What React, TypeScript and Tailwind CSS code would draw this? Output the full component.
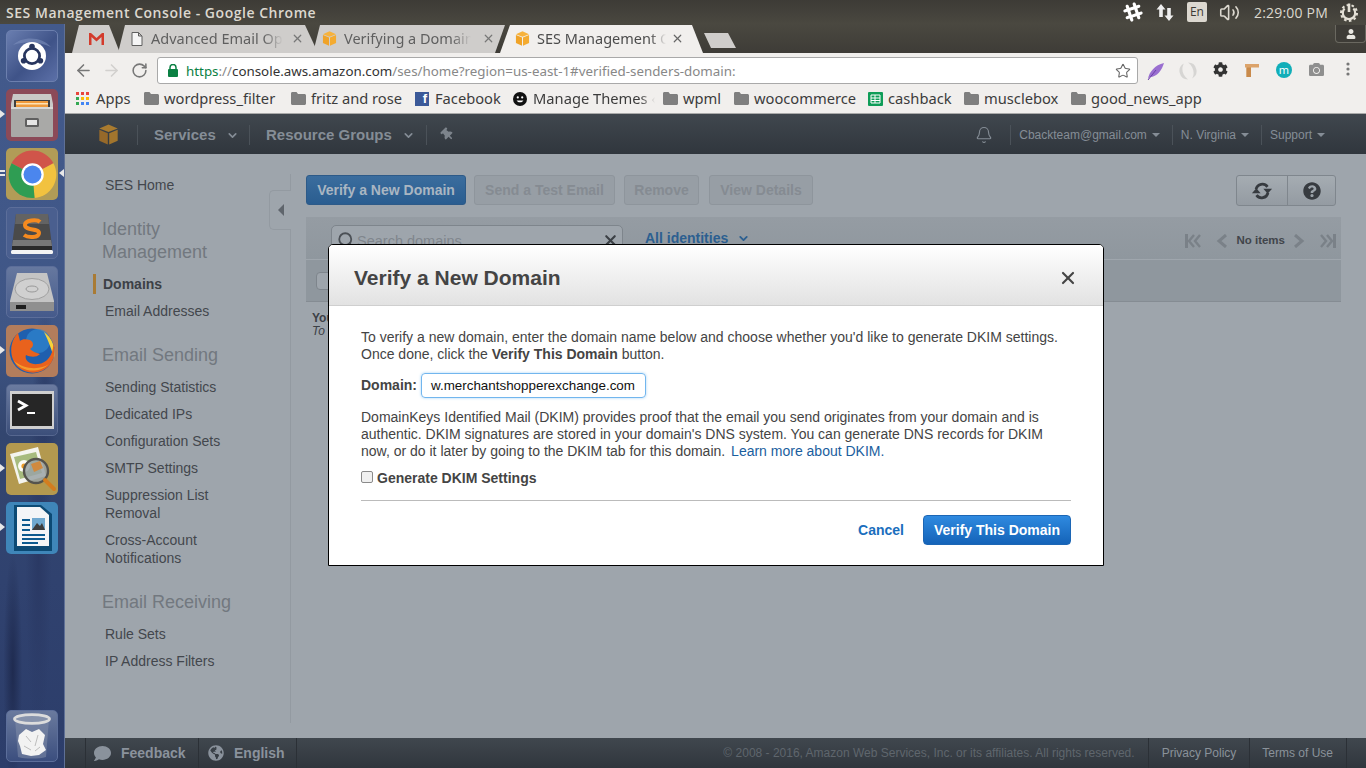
import React from "react";
import { ArrowLeft, ArrowRight, RotateCw, Star, Bell, X, Volume2, ChevronDown, Search } from "lucide-react";
import { FaSlackHash, FaCog, FaQuestionCircle, FaThumbtack, FaComment, FaGlobeAmericas, FaUser, FaCamera } from "react-icons/fa";

const Cube = ({ size, a, b, c }: { size: number; a: string; b: string; c: string }) => (
  <svg width={size} height={size} viewBox="0 0 24 24" className="shrink-0">
    <path d="M12 0.5 22.5 5 12 9.2 1.5 5Z" fill={a} />
    <path d="M1.5 6.5 11.2 10.5V23.5L1.5 19Z" fill={b} />
    <path d="M22.5 6.5 12.8 10.5V23.5L22.5 19Z" fill={c} />
  </svg>
);

const Folder = () => (
  <svg width="15" height="13" viewBox="0 0 15 13" className="shrink-0">
    <path d="M0 1.5C0 .7.6 0 1.4 0H5.5L7 2H13.5C14.3 2 15 2.7 15 3.5V11.5C15 12.3 14.3 13 13.5 13H1.5C.7 13 0 12.3 0 11.5Z" fill="#7f7f7f" />
  </svg>
);

const AppsGrid = () => (
  <svg width="13" height="13" viewBox="0 0 13 13" className="shrink-0">
    {[
      [0, 0, "#e8453c"], [5, 0, "#e8453c"], [10, 0, "#e8453c"],
      [0, 5, "#34a853"], [5, 5, "#fbbc05"], [10, 5, "#fbbc05"],
      [0, 10, "#34a853"], [5, 10, "#4285f4"], [10, 10, "#4285f4"],
    ].map(([x, y, f], i) => (
      <rect key={i} x={x as number} y={y as number} width="3" height="3" fill={f as string} />
    ))}
  </svg>
);

const Tile = ({ cls, children, pipL, pipR, pipD }: { cls: string; children: React.ReactNode; pipL?: boolean; pipR?: boolean; pipD?: boolean }) => (
  <div className={"relative ml-[6px] flex h-[52px] w-[52px] items-center justify-center rounded-[5px] " + cls}>
    {children}
    {pipL && <span className="absolute left-[-6px] top-[21px] h-0 w-0 border-y-[4px] border-l-[5px] border-y-transparent border-l-[#e8e8e8]" />}
    {pipD && <span className="absolute left-[-6px] top-[22px] h-[6px] w-[5px] border-y-2 border-[#e8e8e8]" />}
    {pipR && <span className="absolute right-[-6px] top-[21px] h-0 w-0 border-y-[4px] border-r-[5px] border-y-transparent border-r-[#e8e8e8]" />}
  </div>
);

const Launcher = () => (
  <div className="flex w-[65px] shrink-0 flex-col gap-[7px] border-r border-[#5f7096] bg-[radial-gradient(ellipse_at_20%_87%,#1f2b50_0%,transparent_13%),radial-gradient(ellipse_at_60%_72%,#2a3964_0%,transparent_24%),radial-gradient(ellipse_at_70%_52%,#2b3b66_0%,transparent_20%),linear-gradient(to_bottom,#435a8c_0%,#3f5686_42%,#33466f_55%,#30426f_75%,#2c3d6a_100%)] pb-[6px] pt-[6px]">
    <Tile cls="bg-[linear-gradient(135deg,#6a7eb0,#3f5388_55%,#5c70a8)] border border-[#6c7fae]">
      <svg width="46" height="46" viewBox="0 0 46 46">
        <path d="M4 12C14 2 34 4 42 14 30 8 16 8 4 12Z" fill="#7d90bd" fillOpacity="0.6" />
        <circle cx="23" cy="23" r="14" fill="#fff" />
        <circle cx="23" cy="23" r="7.6" fill="none" stroke="#28365f" strokeWidth="2.8" />
        <circle cx="23" cy="13.6" r="2.8" fill="#28365f" />
        <circle cx="14.6" cy="27.8" r="2.8" fill="#28365f" />
        <circle cx="31.4" cy="27.8" r="2.8" fill="#28365f" />
      </svg>
    </Tile>
    <Tile cls="bg-[#8b4a58]" pipL>
      <svg width="44" height="46" viewBox="0 0 44 46">
        <path d="M3 2H41L43 12V44H1V12Z" fill="#c9c9c7" />
        <rect x="4" y="8" width="36" height="10" fill="#3f3f3f" />
        <rect x="6" y="9" width="32" height="7" fill="#ef9a3c" />
        <rect x="6" y="11" width="32" height="1.5" fill="#fde2b5" />
        <rect x="1" y="15" width="42" height="30" rx="1" fill="#a9a9a7" />
        <rect x="1" y="15" width="42" height="2" fill="#d8d8d6" />
        <rect x="15" y="26" width="14" height="9" rx="1.5" fill="#5f5f5f" />
        <rect x="17" y="28" width="10" height="5" fill="#e5e5e5" />
      </svg>
    </Tile>
    <Tile cls="bg-[#b19c57]" pipD pipR>
      <svg width="49" height="49" viewBox="0 0 48 48">
        <path d="M24 24 3.5 13A23 23 0 0 1 44.5 13Z" fill="#d0554a" />
        <path d="M24 24 44.5 13A23 23 0 0 1 26 47Z" fill="#f2c23f" />
        <path d="M24 24 26 47A23 23 0 0 1 3.5 13Z" fill="#2f9d53" />
        <circle cx="24" cy="24" r="11" fill="#fff" />
        <circle cx="24" cy="24" r="8.8" fill="#4b86ee" />
      </svg>
    </Tile>
    <Tile cls="bg-[#4a5f8f] border border-[#5c6e9a]">
      <svg width="44" height="46" viewBox="0 0 44 46">
        <path d="M6 4H38L42 36H2Z" fill="#4a4a4a" />
        <path d="M6 4H38L39 14H5Z" fill="#636363" />
        <path d="M3 30H41L42 36H2Z" fill="#777" />
        <rect x="2" y="36" width="40" height="4" fill="#2a2a2a" />
        <rect x="1" y="40" width="42" height="4" rx="1.5" fill="#f4f4f4" />
        <path d="M30 12C27 9 15 10 15 15 15 21 29 18 29 23 29 28 18 28 14 25" fill="none" stroke="#f58a1f" strokeWidth="4" />
      </svg>
    </Tile>
    <Tile cls="bg-[linear-gradient(to_bottom,#66789f,#455a8b)] border border-[#5c6e9a]">
      <svg width="46" height="42" viewBox="0 0 46 42">
        <path d="M8 2H38L45 30V40H1V30Z" fill="#c4c4c4" />
        <ellipse cx="23" cy="18" rx="17" ry="10.5" fill="#d0d0d0" stroke="#a0a0a0" />
        <ellipse cx="23" cy="18" rx="6" ry="3" fill="none" stroke="#999" />
        <rect x="1" y="31" width="44" height="9" fill="#8f8f8f" />
        <rect x="7" y="34" width="10" height="4" fill="#1d1d1d" />
      </svg>
    </Tile>
    <Tile cls="bg-[#b37d5c]" pipL>
      <svg width="48" height="48" viewBox="0 0 48 48">
        <circle cx="24" cy="24" r="22.5" fill="#1f5fae" />
        <circle cx="30" cy="14" r="12" fill="#2f86cf" fillOpacity="0.7" />
        <path d="M36 5C44 11 48 20 46 31 44 24 41 15 36 5Z" fill="#f8d23a" />
        <path d="M10 6C2 14 0 30 10 40 20 49 36 47 43 36 47 30 47 22 45 16 46 26 40 36 30 37 22 38 16 33 18 28 22 30 28 31 32 27 28 26 24 24 22 22 26 20 26 15 22 13 18 12 14 12 12 14Z" fill="#e9621d" />
        <path d="M6 34C12 44 30 48 41 37 34 42 18 44 6 34Z" fill="#f59b2c" />
      </svg>
    </Tile>
    <Tile cls="bg-[linear-gradient(to_bottom,#6b7ba0,#3c4f7a)] border border-[#56678f]">
      <svg width="44" height="38" viewBox="0 0 44 38">
        <rect width="44" height="38" fill="#cfcfcf" />
        <rect x="2" y="3" width="40" height="32" fill="#262626" />
        <polyline points="8,10 16,14.5 8,19" fill="none" stroke="#fff" strokeWidth="2.8" />
        <rect x="17" y="21" width="8" height="2" fill="#fff" />
      </svg>
    </Tile>
    <Tile cls="bg-[#b3994f]" pipL>
      <svg width="50" height="50" viewBox="0 0 50 50">
        <path d="M3 10 31 3 39 32 12 40Z" fill="#f4f4ee" />
        <path d="M7 13 29 8 35 29 13 35Z" fill="#a7bb7e" />
        <circle cx="17" cy="22" r="6" fill="#fbfbf5" />
        <circle cx="17" cy="22" r="2.6" fill="#ec9b27" />
        <circle cx="29" cy="27" r="12" fill="#9aa3a6" fillOpacity="0.85" stroke="#55534d" strokeWidth="2.4" />
        <path d="M24 20 33 17 36 24 27 28Z" fill="#d08a3f" />
        <path d="M38 36 47 45" stroke="#d37d1f" strokeWidth="4" strokeLinecap="round" />
      </svg>
    </Tile>
    <Tile cls="bg-[#3f86b9]" pipL>
      <svg width="44" height="48" viewBox="0 0 44 48">
        <path d="M4 1H31L42 10V47H4Z" fill="#0c4a74" />
        <path d="M7 3H30L39 11V42H7Z" fill="#f3f5f7" />
        <rect x="12" y="15" width="8" height="2" fill="#0c5a8f" />
        <rect x="12" y="20" width="8" height="2" fill="#0c5a8f" />
        <rect x="12" y="25" width="8" height="2" fill="#0c5a8f" />
        <rect x="22" y="14" width="13" height="12" fill="#6fa8cf" />
        <path d="M22 26 27 19 30 22 32 19 35 26Z" fill="#3d3d3d" />
        <rect x="12" y="30" width="23" height="2" fill="#0c5a8f" />
        <rect x="12" y="34" width="23" height="2" fill="#0c5a8f" />
        <rect x="12" y="38" width="16" height="2" fill="#0c5a8f" />
      </svg>
    </Tile>
    <div className="mt-auto">
      <Tile cls="bg-[linear-gradient(to_bottom,#6a7a9e,#3b4e7e)] border border-[#5c6e9a]">
        <svg width="38" height="46" viewBox="0 0 38 46">
          <path d="M2 6H36L33 44C26 46 12 46 5 44Z" fill="#8692ab" fillOpacity="0.5" />
          <ellipse cx="19" cy="6" rx="17.5" ry="4.4" fill="#8793ac" stroke="#dcdcdc" strokeWidth="2.8" />
          <path d="M6 22 13 16 19 19 26 16 32 22 30 31 33 37 26 42 18 43 9 41 7 33 5 28Z" fill="#f2f2f2" />
          <path d="M13 23 18 29M25 22 22 33M11 33 18 37M27 34 22 38" stroke="#bdbdbd" strokeWidth="1" />
        </svg>
      </Tile>
    </div>
  </div>
);

const TopBar = () => (
  <div className="flex h-[24px] shrink-0 items-center bg-[linear-gradient(to_bottom,#3d3b36,#4a4840)] pl-[6px] font-['Open_Sans',sans-serif] text-[14px] font-semibold tracking-[0.53px] text-[#dcd8cf]">
    <span className="whitespace-nowrap">SES Management Console - Google Chrome</span>
    <div className="ml-auto flex h-full items-center">
      <div className="flex w-[32px] justify-center text-white"><FaSlackHash size={22} /></div>
      <div className="mr-[6px] flex w-[32px] justify-center">
        <svg width="18" height="17" viewBox="0 0 18 17">
          <path d="M5 0 9.5 5.5H6.8V13H3.2V5.5H.5Z" fill="#eee" />
          <path d="M13 17 8.5 11.5H11.2V4H14.8V11.5H17.5Z" fill="#eee" />
        </svg>
      </div>
      <div className="flex h-[20px] w-[20px] items-center justify-center rounded-[2px] bg-[#dcd8d0] text-[12px] font-normal tracking-normal text-[#3d3b36]">En</div>
      <div className="ml-[12px] flex w-[22px] justify-center text-[#dcd8cf]"><Volume2 size={21} strokeWidth={1.8} /></div>
      <span className="ml-[13px] whitespace-nowrap font-normal tracking-[0.2px]">2:29:00 PM</span>
      <div className="ml-[11px] mr-[7px] flex w-[20px] justify-center">
        <svg width="20" height="20" viewBox="0 0 20 20" fill="none" stroke="#e4e0d6">
          <circle cx="10" cy="11" r="8" strokeWidth="2" strokeDasharray="2.6 2.4" />
          <path d="M5.6 6.6A6.2 6.2 0 1 0 14.4 6.6" strokeWidth="2.2" />
          <path d="M10 1.5V10" strokeWidth="2.6" />
        </svg>
      </div>
    </div>
  </div>
);

const TabStrip = () => (
  <div className="relative flex h-[29px] shrink-0 bg-[linear-gradient(to_bottom,#4a4840,#3e3c37)] pl-[7px] pt-[1px] font-['Noto_Sans',sans-serif] text-[14.5px]">
    <div className="flex h-[28px] w-[48px] items-center justify-center bg-[#cfcdcb] pb-[1px] [clip-path:polygon(7px_0,37px_0,48px_100%,0_100%)]">
      <svg width="15" height="12" viewBox="0 0 15 12">
        <path d="M0 0H2L7.5 5 13 0H15V12H12.5V4L7.5 8.5 2.5 4V12H0Z" fill="#d33b2c" />
      </svg>
    </div>
    <div className="ml-[-2px] flex h-[28px] w-[200px] items-center bg-[#cfcdcb] pb-[1px] pl-[13px] pr-[14px] [clip-path:polygon(7px_0,187px_0,200px_100%,0_100%)]">
      <svg width="12" height="14" viewBox="0 0 12 14" className="shrink-0">
        <path d="M1 .5H7.5L11 4V13.5H1ZM7.5.5V4H11" fill="#f5f5f5" stroke="#5f5f5f" />
      </svg>
      <span className="ml-[8px] w-[132px] overflow-hidden whitespace-nowrap text-[#5f5f5f] [mask-image:linear-gradient(to_right,black_85%,transparent)]">Advanced Email Options</span>
      <X size={13} strokeWidth={2.2} className="ml-[8px] shrink-0 text-[#777]" />
    </div>
    <div className="ml-[-5px] flex h-[28px] w-[192px] items-center bg-[#cfcdcb] pb-[1px] pl-[9px] pr-[10px] [clip-path:polygon(0_100%,7px_0,182px_0,192px_0,182px_100%)]">
      <Cube size={15} a="#f7b23b" b="#f0a328" c="#f4ab30" />
      <span className="ml-[7px] w-[130px] overflow-hidden whitespace-nowrap text-[#5f5f5f] [mask-image:linear-gradient(to_right,black_85%,transparent)]">Verifying a Domain</span>
      <X size={13} strokeWidth={2.2} className="ml-[11px] shrink-0 text-[#777]" />
    </div>
    <div className="ml-[-5px] flex h-[28px] w-[203px] items-center bg-[#f1efed] pb-[1px] pl-[15px] pr-[10px] [clip-path:polygon(0_100%,10px_0,192px_0,203px_100%)]">
      <Cube size={15} a="#f7b23b" b="#f0a328" c="#f4ab30" />
      <span className="ml-[7px] w-[129px] overflow-hidden whitespace-nowrap text-[#4c4c4c] [mask-image:linear-gradient(to_right,black_88%,transparent)]">SES Management Console</span>
      <X size={13} strokeWidth={2.2} className="ml-[5px] shrink-0 text-[#666]" />
    </div>
    <div className="ml-[1px] mt-[8px] h-[15px] w-[32px] bg-[#cfcdcb] [clip-path:polygon(0_0,24px_0,32px_100%,7px_100%)]" />
    <div className="ml-auto mr-0 flex h-[18px] w-[31px] items-center justify-center rounded-b-[4px] border border-t-0 border-[#6a6860] bg-[#3e3c37] text-[#e8e6e0]">
      <FaUser size={10} />
    </div>
  </div>
);

const Toolbar = () => (
  <div className="flex h-[35px] shrink-0 items-center bg-[#f1efed] pl-[4px]">
    <div className="flex w-[28px] justify-center text-[#777]"><ArrowLeft size={19} strokeWidth={2} /></div>
    <div className="flex w-[28px] justify-center text-[#d2d0ce]"><ArrowRight size={19} strokeWidth={2} /></div>
    <div className="flex w-[28px] justify-center text-[#777]"><RotateCw size={17} strokeWidth={2.2} /></div>
    <div className="ml-[4px] flex h-[27px] w-[981px] items-center rounded-[3px] border border-[#a9a9a9] bg-white pl-[10px] font-['Noto_Sans',sans-serif] text-[13.35px]">
      <svg width="10" height="13" viewBox="0 0 10 13" className="shrink-0">
        <path d="M2 5.5V3.5A3 3 0 0 1 8 3.5V5.5" fill="none" stroke="#0b8043" strokeWidth="1.5" />
        <rect y="5" width="10" height="8" rx="1" fill="#0b8043" />
      </svg>
      <span className="ml-[8px] mt-[1px] whitespace-nowrap">
        <span className="text-[#0b8043]">https</span>
        <span className="text-[#888]">://</span>
        <span className="text-[#333]">console.aws.amazon.com</span>
        <span className="text-[#888]">/ses/home?region=us-east-1#verified-senders-domain:</span>
      </span>
      <Star size={16} strokeWidth={1.6} className="ml-auto mr-[6px] text-[#666]" />
    </div>
    <div className="ml-[2px] flex">
      <div className="flex w-[32px] justify-center">
        <svg width="18" height="18" viewBox="0 0 18 18">
          <path d="M1 17C2 10 8 3 17 1 15 8 10 15 3 15Z" fill="#9a6fd0" />
          <path d="M1 18 9 8" stroke="#6b3fa8" strokeWidth="1" />
        </svg>
      </div>
      <div className="flex w-[32px] justify-center">
        <svg width="18" height="18" viewBox="0 0 18 18" fill="#d6d5d3">
          <path d="M9 .5A8.5 8.5 0 0 1 13 16.5C16 12 15 5 9 .5Z" />
          <path d="M9 17.5A8.5 8.5 0 0 1 5 1.5C2 6 3 13 9 17.5Z" />
        </svg>
      </div>
      <div className="flex w-[32px] justify-center text-[#333]"><FaCog size={15} /></div>
      <div className="flex w-[32px] justify-center">
        <svg width="14" height="15" viewBox="0 0 14 15">
          <path d="M0 2H14V5.5H6V15H1.5V5.5H0Z" fill="#dca36a" />
          <path d="M1.5 5.5H6V15H1.5Z" fill="#c98a4b" />
        </svg>
      </div>
      <div className="flex w-[32px] justify-center">
        <div className="flex h-[16px] w-[16px] items-center justify-center rounded-full bg-[#11aeb8] font-['Noto_Sans',sans-serif] text-[11px] leading-none text-white">m</div>
      </div>
      <div className="flex w-[32px] justify-center text-[#8f8f8f]"><FaCamera size={15} /></div>
      <div className="flex w-[32px] justify-center">
        <svg width="4" height="14" viewBox="0 0 4 14" fill="#777">
          <circle cx="2" cy="2" r="1.6" /><circle cx="2" cy="7" r="1.6" /><circle cx="2" cy="12" r="1.6" />
        </svg>
      </div>
    </div>
  </div>
);

const BM = ({ w, icon, label, fade }: { w: string; icon: React.ReactNode; label: string; fade?: boolean }) => (
  <div className={"flex items-center " + w}>
    <div className="flex w-[20px] shrink-0">{icon}</div>
    <span className={fade ? "w-[122px] overflow-hidden whitespace-nowrap [mask-image:linear-gradient(to_right,black_88%,transparent)]" : "whitespace-nowrap"}>{label}</span>
  </div>
);

const Bookmarks = () => (
  <div className="flex h-[26px] shrink-0 items-center border-b border-[#a9a9a9] bg-[#f1efed] pb-[4px] pl-[11px] font-['Noto_Sans',sans-serif] text-[14.7px] text-[#3c3c3c]">
    <BM w="w-[68px]" icon={<AppsGrid />} label="Apps" />
    <BM w="w-[147px]" icon={<Folder />} label="wordpress_filter" />
    <BM w="w-[124px]" icon={<Folder />} label="fritz and rose" />
    <BM
      w="w-[98px]"
      icon={
        <div className="flex h-[14px] w-[14px] items-end justify-end bg-[#3b5998] pr-[2px] font-['Liberation_Sans',sans-serif] text-[13px] font-bold leading-[14px] text-white">f</div>
      }
      label="Facebook"
    />
    <BM
      w="w-[150px]"
      icon={
        <svg width="14" height="14" viewBox="0 0 14 14">
          <circle cx="7" cy="7" r="7" fill="#111" />
          <circle cx="4.8" cy="5.4" r="1.1" fill="#fff" />
          <circle cx="9.2" cy="5.4" r="1.1" fill="#fff" />
          <path d="M3.6 8.4C5 11 9 11 10.4 8.4Z" fill="#fff" />
        </svg>
      }
      label="Manage Themes ‹"
      fade
    />
    <BM w="w-[71px]" icon={<Folder />} label="wpml" />
    <BM w="w-[134px]" icon={<Folder />} label="woocommerce" />
    <BM
      w="w-[96px]"
      icon={
        <svg width="15" height="14" viewBox="0 0 15 14">
          <rect width="15" height="14" rx="1" fill="#0f9d58" />
          <path d="M3 3H12V11H3ZM3 6H12M3 8.5H12M7 3V11" fill="none" stroke="#fff" strokeWidth="1" />
        </svg>
      }
      label="cashback"
    />
    <BM w="w-[107px]" icon={<Folder />} label="musclebox" />
    <BM w="w-[140px]" icon={<Folder />} label="good_news_app" />
  </div>
);

const NavDiv = () => <div className="h-[20px] w-px shrink-0 bg-[#4b5259]" />;

const Caret = () => <span className="ml-[5px] mt-[1px] h-0 w-0 border-x-[4px] border-t-[4px] border-x-transparent border-t-[#858d96]" />;

const AwsNav = () => (
  <div className="flex h-[40px] shrink-0 items-center bg-[linear-gradient(to_bottom,#40474e,#30363d)] pt-[1px] font-['Liberation_Sans',sans-serif] text-[#858d96]">
    <div className="w-[72px] pl-[33px]"><Cube size={21} a="#a97b2f" b="#96692a" c="#a2752d" /></div>
    <NavDiv />
    <div className="mt-[1px] flex w-[111px] items-center pl-[16px] text-[15px] font-bold">
      <span>Services</span>
      <ChevronDown size={13} strokeWidth={3} className="ml-[10px]" />
    </div>
    <NavDiv />
    <div className="mt-[1px] flex w-[176px] items-center pl-[16px] text-[15px] font-bold">
      <span className="whitespace-nowrap">Resource Groups</span>
      <ChevronDown size={13} strokeWidth={3} className="ml-[10px]" />
    </div>
    <NavDiv />
    <div className="ml-[14px] text-[#7d848c]"><FaThumbtack size={13} className="-rotate-45" /></div>
    <div className="ml-auto flex items-center pr-[41px] text-[12px]">
      <Bell size={18} strokeWidth={1.5} />
      <div className="ml-[17px]"><NavDiv /></div>
      <span className="ml-[8px] whitespace-nowrap">Cbackteam@gmail.com</span>
      <Caret />
      <div className="ml-[12px]"><NavDiv /></div>
      <span className="ml-[8px] whitespace-nowrap">N. Virginia</span>
      <Caret />
      <div className="ml-[12px]"><NavDiv /></div>
      <span className="ml-[8px]">Support</span>
      <Caret />
    </div>
  </div>
);

const Item = ({ cls, children }: { cls: string; children: React.ReactNode }) => (
  <div className={"pl-[40px] text-[14px] leading-[18px] text-[#43474d] " + cls}>{children}</div>
);
const Head = ({ children, cls }: { children: React.ReactNode; cls?: string }) => (
  <div className={"mt-[24px] pl-[37px] text-[18px] leading-[23px] text-[#72787f] " + (cls ?? "")}>{children}</div>
);

const Sidebar = () => (
  <div className="relative mb-[15px] mt-[20px] w-[226px] shrink-0 border-r border-[#939aa1] pt-[2px]">
    <Item cls="">SES Home</Item>
    <Head>Identity<br />Management</Head>
    <div className="relative mt-[11px] pl-[38px] text-[14px] font-bold leading-[18px] text-[#3c4046]">
      <span className="absolute left-[28px] top-[-1px] h-[20px] w-[3px] bg-[#a97b35]" />
      Domains
    </div>
    <Item cls="mt-[9px]">Email Addresses</Item>
    <Head>Email Sending</Head>
    <Item cls="mt-[11px]">Sending Statistics</Item>
    <Item cls="mt-[9px]">Dedicated IPs</Item>
    <Item cls="mt-[9px]">Configuration Sets</Item>
    <Item cls="mt-[9px]">SMTP Settings</Item>
    <Item cls="mt-[9px]">Suppression List<br />Removal</Item>
    <Item cls="mt-[9px]">Cross-Account<br />Notifications</Item>
    <Head>Email Receiving</Head>
    <Item cls="mt-[11px]">Rule Sets</Item>
    <Item cls="mt-[9px]">IP Address Filters</Item>
    <div className="absolute right-[-1px] top-[16px] flex h-[40px] w-[22px] items-center justify-center rounded-l-[5px] border border-r-0 border-[#939aa1] bg-[#9ea5ac]">
      <span className="h-0 w-0 border-y-[6px] border-r-[6px] border-y-transparent border-r-[#5f656c]" />
    </div>
  </div>
);

const GhostBtn = ({ w, children }: { w: string; children: React.ReactNode }) => (
  <div className={"flex h-[30px] items-center justify-center rounded-[3px] border border-[#8e959c] bg-[#979ea5] text-[14px] font-bold text-[#858b92] " + w}>{children}</div>
);

const Pager = () => (
  <div className="absolute right-[5px] top-[15px] flex items-center text-[#7a8188]">
    <svg width="16" height="14" viewBox="0 0 16 14" fill="none" stroke="currentColor">
      <path d="M1.5 0V14" strokeWidth="3" />
      <path d="M9 1 4 7 9 13M15 1 10 7 15 13" strokeWidth="2.4" />
    </svg>
    <svg width="12" height="14" viewBox="0 0 12 14" fill="none" stroke="currentColor" className="ml-[15px]">
      <path d="M10 1 3 7 10 13" strokeWidth="3" />
    </svg>
    <span className="ml-[8px] text-[11.5px] font-bold text-[#41454b]">No items</span>
    <svg width="12" height="14" viewBox="0 0 12 14" fill="none" stroke="currentColor" className="ml-[8px]">
      <path d="M2 1 9 7 2 13" strokeWidth="3" />
    </svg>
    <svg width="16" height="14" viewBox="0 0 16 14" fill="none" stroke="currentColor" className="ml-[15px]">
      <path d="M1 1 6 7 1 13M7 1 12 7 7 13" strokeWidth="2.4" />
      <path d="M14.5 0V14" strokeWidth="3" />
    </svg>
  </div>
);

const Main = () => (
  <div className="relative flex-1 pl-[15px] pr-[25px] pt-[21px]">
    <div className="flex items-start">
      <div className="flex h-[30px] w-[160px] items-center justify-center rounded-[3px] border border-[#2d5a88] bg-[linear-gradient(to_bottom,#3b6d9e,#2a5d90)] text-[14px] font-bold text-[#aab6c2]">Verify a New Domain</div>
      <div className="ml-[8px]"><GhostBtn w="w-[141px]">Send a Test Email</GhostBtn></div>
      <div className="ml-[9px]"><GhostBtn w="w-[75px]">Remove</GhostBtn></div>
      <div className="ml-[10px]"><GhostBtn w="w-[104px]">View Details</GhostBtn></div>
      <div className="ml-auto mr-[5px] flex h-[31px] w-[100px] overflow-hidden rounded-[3px] border border-[#7f868d] bg-[linear-gradient(to_bottom,#a5acb2,#949ba2)] text-[#373b40]">
        <div className="flex w-[51px] items-center justify-center border-r border-[#7f868d]">
          <svg width="22" height="22" viewBox="0 0 24 24" fill="none" stroke="currentColor">
            <path d="M5.5 10A7 7 0 0 1 18 7.5" strokeWidth="3" />
            <path d="M13.5 9.5H23L18.2 15Z" fill="currentColor" stroke="none" />
            <path d="M18.5 14A7 7 0 0 1 6 16.5" strokeWidth="3" />
            <path d="M1 14.5H10.5L5.8 9Z" fill="currentColor" stroke="none" />
          </svg>
        </div>
        <div className="flex flex-1 items-center justify-center"><FaQuestionCircle size={18} /></div>
      </div>
    </div>
    <div className="mt-[11px] h-[85px] border-b border-[#858c93] bg-[#8f979e]">
      <div className="relative h-[43px] border-b border-[#9fa6ad] bg-[linear-gradient(to_bottom,#959ca3,#8f979e)]">
        <div className="absolute left-[25px] top-[8px] flex h-[40px] w-[292px] rounded-[5px] border border-[#7e858c] bg-[#9ea5ac] pl-[5px] pt-[5px] text-[14.5px] text-[#80868d]">
          <Search size={18} strokeWidth={2.4} className="text-[#4b5056]" />
          <span className="ml-[2px]">Search domains</span>
          <X size={17} strokeWidth={3} className="absolute right-[3px] top-[6px] text-[#3c4046]" />
        </div>
        <div className="absolute left-[339px] top-[11px] flex items-center text-[14px] font-bold text-[#2c5f90]">
          All identities
          <ChevronDown size={13} strokeWidth={3.4} className="ml-[9px]" />
        </div>
        <Pager />
      </div>
      <div className="ml-[10px] mt-[12px] h-[18px] w-[20px] rounded-[4px] border border-[#7e858c] bg-[#9ea5ac]" />
    </div>
    <div className="ml-[6px] mt-[10px] text-[12px] leading-[13px] text-[#3c4046]">
      <div className="font-bold">You</div>
      <div className="italic">To</div>
    </div>
  </div>
);

const Modal = () => (
  <div className="absolute left-[263px] top-[90px] h-[322px] w-[776px] overflow-hidden rounded-t-[5px] border border-black bg-white text-[14px] text-[#444]">
    <div className="flex h-[61px] items-center border-b border-[#cfcfcf] bg-[linear-gradient(to_bottom,#ffffff,#e2e2e2)] pl-[25px] pr-[25px] pt-[5px]">
      <span className="text-[21px] font-bold">Verify a New Domain</span>
      <X size={20} strokeWidth={2.6} className="ml-auto text-[#444]" />
    </div>
    <div className="px-[32px] pt-[23px] leading-[17px]">
      <p>To verify a new domain, enter the domain name below and choose whether you'd like to generate DKIM settings.<br />Once done, click the <b>Verify This Domain</b> button.</p>
      <div className="mt-[10px] flex h-[25px] items-center">
        <span className="font-bold">Domain:</span>
        <div className="ml-[4px] flex h-[25px] w-[225px] items-center rounded-[4px] border border-[#72b6ee] pl-[9px] text-[13.4px] text-[#111] shadow-[0_0_3px_#a8d4f5]">w.merchantshopperexchange.com</div>
      </div>
      <p className="mt-[11px]">DomainKeys Identified Mail (DKIM) provides proof that the email you send originates from your domain and is<br />authentic. DKIM signatures are stored in your domain's DNS system. You can generate DNS records for DKIM<br />now, or do it later by going to the DKIM tab for this domain. <span className="ml-[2px] text-[#1a5e9e]">Learn more about DKIM.</span></p>
      <div className="mt-[10px] flex items-center">
        <span className="mt-[-3px] h-[12px] w-[12px] rounded-[2px] border border-[#8a8a8a] bg-[#f0f0f0]" />
        <span className="ml-[4px] font-bold">Generate DKIM Settings</span>
      </div>
      <div className="mt-[13px] h-px bg-[#bbb]" />
      <div className="mt-[14px] flex items-center justify-end">
        <span className="mr-[19px] mt-[1px] font-bold text-[#1a6ebd]">Cancel</span>
        <div className="flex h-[30px] w-[148px] items-center justify-center rounded-[4px] border border-[#1c66b5] bg-[linear-gradient(to_bottom,#2f8ae0,#1463b8)] font-bold text-white">Verify This Domain</div>
      </div>
    </div>
  </div>
);

const Footer = () => (
  <div className="flex h-[30px] shrink-0 items-center bg-[linear-gradient(to_bottom,#40474e,#30363d)] text-[#8a929c]">
    <div className="ml-[20px] h-full w-px bg-[#2b3036]" />
    <div className="flex w-[112px] items-center pl-[8px] text-[14px] font-bold">
      <FaComment size={17} />
      <span className="ml-[10px]">Feedback</span>
    </div>
    <div className="h-full w-px bg-[#2b3036]" />
    <div className="flex w-[97px] items-center pl-[9px] text-[14px] font-bold">
      <FaGlobeAmericas size={16} />
      <span className="ml-[10px]">English</span>
    </div>
    <div className="h-full w-px bg-[#2b3036]" />
    <div className="ml-auto flex h-full items-center text-[12px]">
      <span className="whitespace-nowrap text-[#5f666d]">© 2008 - 2016, Amazon Web Services, Inc. or its affiliates. All rights reserved.</span>
      <div className="ml-[13px] h-full w-px bg-[#2b3036]" />
      <span className="ml-[13px] whitespace-nowrap text-[#8a929a]">Privacy Policy</span>
      <div className="ml-[13px] h-full w-px bg-[#2b3036]" />
      <span className="ml-[12px] whitespace-nowrap text-[#8a929a]">Terms of Use</span>
      <div className="ml-[13px] mr-[19px] h-full w-px bg-[#2b3036]" />
    </div>
  </div>
);

export default function App() {
  return (
    <div className="flex h-[768px] w-[1366px] flex-col overflow-hidden font-['Liberation_Sans',sans-serif]">
      <TopBar />
      <div className="flex min-h-0 flex-1">
        <Launcher />
        <div className="flex min-w-0 flex-1 flex-col">
          <TabStrip />
          <Toolbar />
          <Bookmarks />
          <AwsNav />
          <div className="relative flex min-h-0 flex-1 bg-[#9ea5ac]">
            <Sidebar />
            <Main />
            <Modal />
          </div>
          <Footer />
        </div>
      </div>
    </div>
  );
}
